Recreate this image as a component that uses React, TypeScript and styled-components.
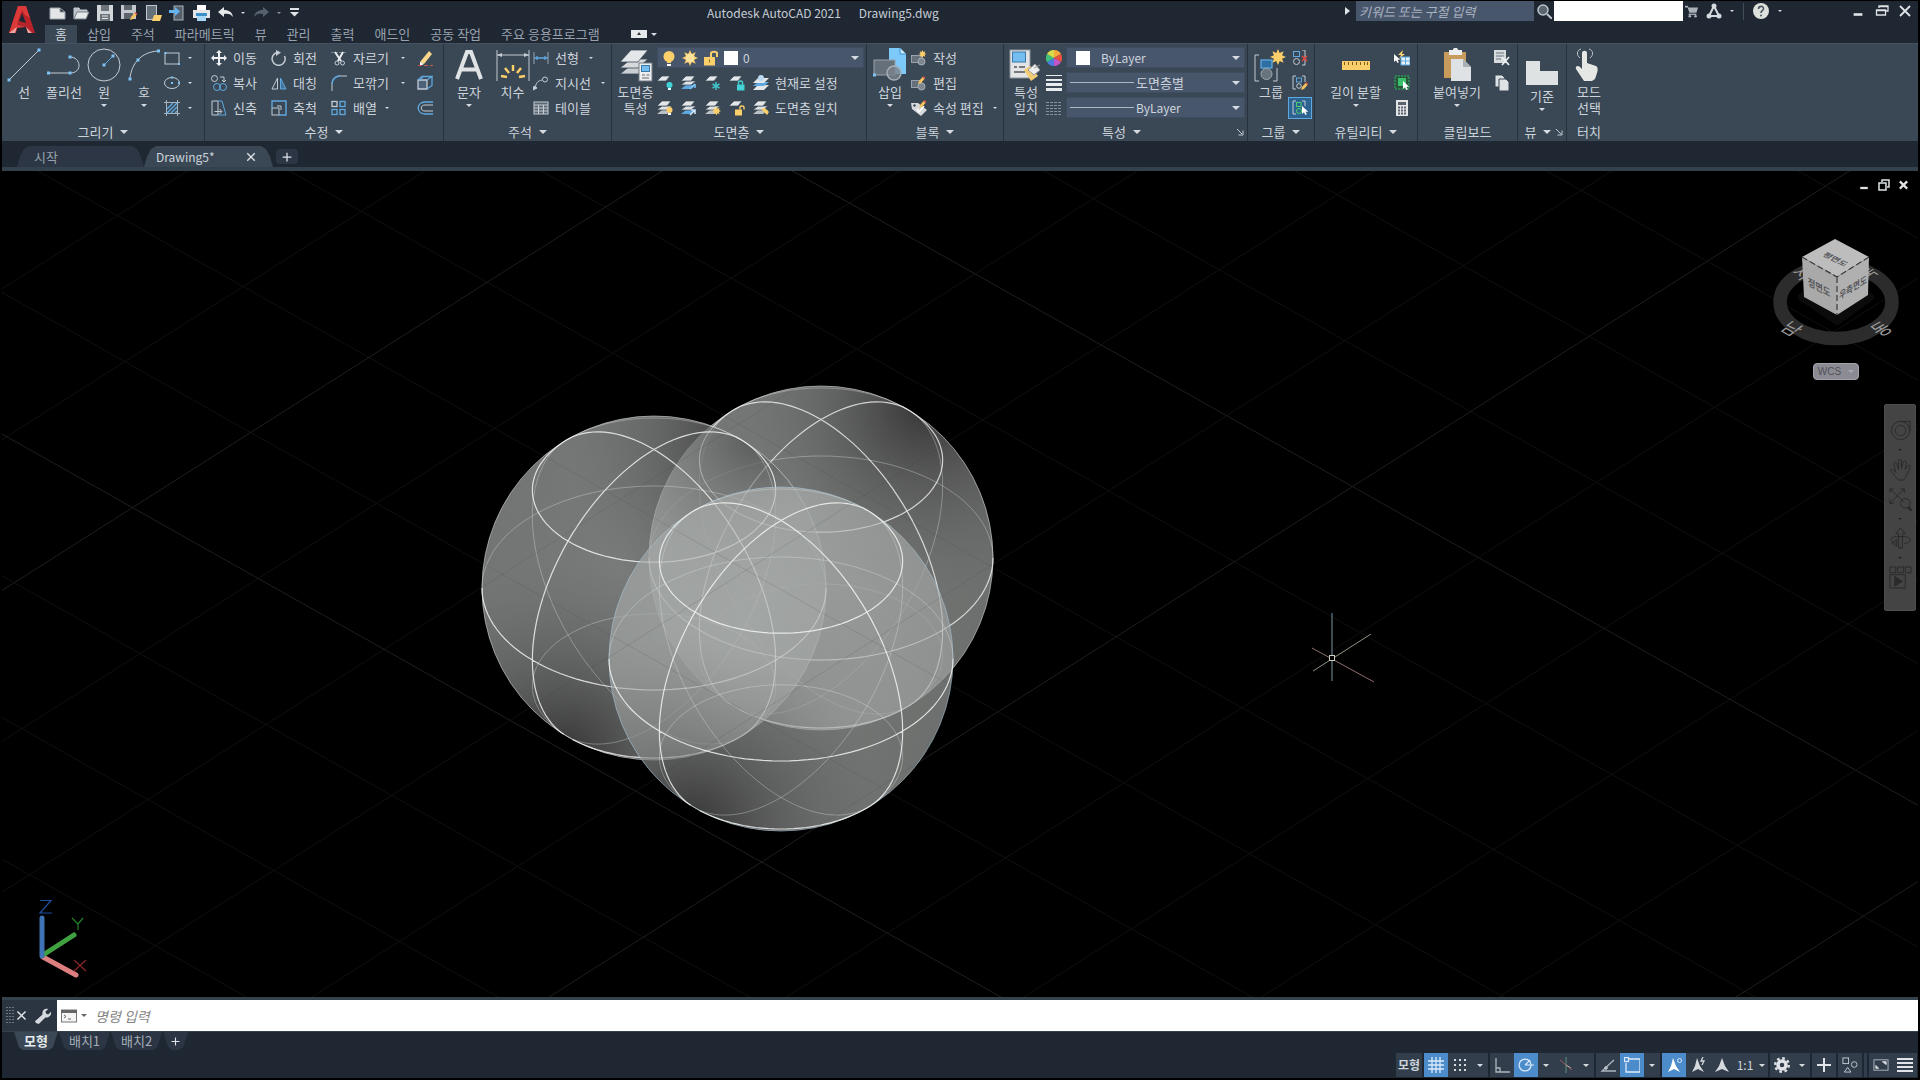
import React from "react";
import styled, { createGlobalStyle, css } from "styled-components";

const c = {
  chrome: "#1f2733",
  ribbon: "#3a4754",
  edge: "#28323e",
  field: "#48566c",
  text: "#ccd4dc",
  dim: "#98a2ae",
  line: "#c4ccd4",
  blue: "#5fa9e0",
  yellow: "#fbcf6a",
  active: "#4d8ccb",
};

const Global = createGlobalStyle`
  * { box-sizing: border-box; }
  html, body { margin: 0; background: #000; }
  body, button, input, select {
    font-family: "Noto Sans CJK KR", "Noto Sans", sans-serif;
    font-size: 13px;
    line-height: 16px;
    color: ${c.text};
  }
  button { background: none; border: 0; padding: 0; margin: 0; white-space: nowrap; }
  svg { display: block; flex: none; }
`;

/* ---------- frame ---------- */

const Page = styled.div`
  display: flex;
  flex-direction: column;
  min-height: 100vh;
  padding: 1px 2px 2px;
  background: #000;
`;
const Header = styled.header`
  position: relative;
  background: ${c.chrome};
`;
const Logo = styled.div`
  position: absolute;
  left: 6px;
  top: 3px;
`;
const TitleBar = styled.div`
  display: flex;
  align-items: center;
  height: 24px;
  overflow: hidden;
`;
const QuickAccess = styled.div`
  display: flex;
  align-items: center;
  gap: 6px;
  flex: 0 0 36.8%;
  padding-left: 46px;
`;
const QuickButton = styled.button<{ $w?: number }>`
  display: flex;
  justify-content: center;
  align-items: center;
  width: ${(p) => p.$w ?? 18}px;
  height: 20px;
`;
const WindowTitle = styled.div`
  display: flex;
  gap: 18px;
  font-size: 12px;
  color: #c5ccd3;
`;
const TitleTools = styled.div`
  display: flex;
  align-items: center;
  height: 20px;
  margin: 0 4px 4px auto;
`;
const SearchBox = styled.input`
  width: 178px;
  height: 20px;
  margin-left: 6px;
  padding: 0 3px;
  border: 0;
  background: ${c.field};
  font-style: italic;
  &::placeholder { color: #a9b2c0; opacity: 1; }
`;
const UserBox = styled.div`
  width: 129px;
  height: 20px;
  background: #fff;
`;
const ToolButton = styled.button<{ $w: number }>`
  display: flex;
  justify-content: center;
  align-items: center;
  width: ${(p) => p.$w}px;
  height: 20px;
`;
const MinimizeButton = styled(ToolButton)`
  justify-content: flex-end;
  padding-right: 3px;
`;
const Rule = styled.span`
  width: 1px;
  height: 17px;
  margin: 0 7px;
  background: #434d5a;
`;

const TabRow = styled.nav`
  display: flex;
  align-items: center;
  height: 18px;
  padding-left: 43px;
`;
const RibbonTab = styled.button<{ $on?: boolean }>`
  height: 18px;
  padding: 0 10px;
  color: ${(p) => (p.$on ? c.text : c.dim)};
  ${(p) => p.$on && css`background: ${c.ribbon};`}
`;
const ViewToggle = styled.button`
  display: flex;
  align-items: center;
  gap: 4px;
  margin-left: 21px;
`;

/* ---------- ribbon ---------- */

const Ribbon = styled.div`
  display: flex;
  height: 98px;
  background: ${c.ribbon};
  border-top: 1px solid #44515e;
`;
const Panel = styled.section<{ $w?: number }>`
  display: flex;
  flex-direction: column;
  flex: 0 0 auto;
  width: ${(p) => (p.$w ? p.$w + "px" : "auto")};
  border-right: ${(p) => (p.$w ? "1px solid " + c.edge : "0")};
`;
const PanelBody = styled.div`
  display: flex;
  align-items: flex-start;
  flex: 1;
  padding: 1px 2px 0;
`;
const PanelTitle = styled.div<{ $launch?: boolean }>`
  position: relative;
  display: flex;
  justify-content: center;
  align-items: center;
  gap: 7px;
  height: 19px;
  padding-right: ${(p) => (p.$launch ? 8 : 0)}px;
`;
const Launcher = styled.button`
  position: absolute;
  right: 3px;
  top: 6px;
`;
const BigButton = styled.button<{ $w: number; $drop?: number }>`
  display: flex;
  flex-direction: column;
  align-items: center;
  width: ${(p) => p.$w}px;
  padding-top: ${(p) => 3 + (p.$drop ?? 0)}px;
  flex: none;
`;
const BigLabel = styled.span`
  margin-top: 2px;
  text-align: center;
  white-space: pre-line;
`;
const Stack = styled.div`
  display: flex;
  flex-direction: column;
  flex: 1 1 auto;
`;
const ToolRow = styled.div<{ $gap?: number }>`
  display: flex;
  align-items: center;
  gap: ${(p) => p.$gap ?? 8}px;
  height: 25px;
`;
const SmallButton = styled.button<{ $on?: boolean }>`
  display: flex;
  align-items: center;
  gap: 6px;
  ${(p) =>
    p.$on &&
    css`
      padding: 2px 3px;
      margin-left: -4px;
      border: 1px solid #5fa9e0;
      background: #2c6391;
    `}
`;
const Modify = styled.div`
  display: grid;
  grid-template-columns: 60px 60px 86px 18px;
  grid-auto-rows: 25px;
  align-items: center;
  padding-left: 4px;
`;
const Split = styled.div<{ $wide?: boolean }>`
  display: flex;
  align-items: center;
  justify-content: ${(p) => (p.$wide ? "space-between" : "flex-start")};
  gap: 8px;
  padding-right: 12px;
`;
const Combo = styled.label`
  display: flex;
  align-items: center;
  gap: 5px;
  flex: 1;
  height: 21px;
  padding: 0 4px 0 3px;
  background: ${c.field};
  border: 1px solid #3f4c60;
`;
const Select = styled.select<{ $latin?: boolean }>`
  flex: 1;
  min-width: 0;
  appearance: none;
  border: 0;
  padding: 0;
  background: transparent;
  outline: none;
  font-size: ${(p) => (p.$latin ? 12 : 13)}px;
`;
const Swatch = styled.span<{ $gap?: number }>`
  width: 14px;
  height: 14px;
  margin: 0 ${(p) => p.$gap ?? 0}px;
  background: #fff;
`;
const Stroke = styled.span`
  width: 64px;
  height: 1px;
  margin-right: -3px;
  background: #aeb8c4;
`;

const Caret = styled.span<{ $s?: number; $c?: string }>`
  display: block;
  flex: none;
  width: 0;
  height: 0;
  border: ${(p) => p.$s ?? 3}px solid transparent;
  border-top-color: ${(p) => p.$c ?? "#d5dbe1"};
  border-bottom-width: 0;
`;
const CaretBelow = styled(Caret)`
  margin-top: 4px;
`;

/* ---------- document tabs ---------- */

const DocTabs = styled.nav`
  display: flex;
  align-items: flex-end;
  height: 30px;
  padding-left: 15px;
  background: ${c.chrome};
  border-bottom: 4px solid #33414c;
`;
const DocTab = styled.div<{ $on?: boolean; $w: number }>`
  display: flex;
  align-items: center;
  justify-content: space-between;
  width: ${(p) => p.$w}px;
  height: 21px;
  padding: 0 16px 0 ${(p) => (p.$on ? 12 : 17)}px;
  font-size: ${(p) => (p.$on ? 12 : 13)}px;
  color: ${(p) => (p.$on ? c.text : c.dim)};
  background: ${(p) => (p.$on ? c.ribbon : "#2c3644")};
  clip-path: polygon(0 100%, 3px 50%, 7px 3px, 12px 0, calc(100% - 12px) 0, calc(100% - 7px) 3px, calc(100% - 3px) 50%, 100% 100%);
`;
const NewTab = styled.button`
  display: flex;
  align-items: center;
  justify-content: center;
  width: 22px;
  height: 15px;
  margin: 0 0 3px 3px;
  background: #2c3644;
  border-radius: 4px;
`;

/* ---------- drawing area ---------- */

const Viewport = styled.main`
  position: relative;
  flex: 1 1 0;
  min-height: 400px;
  overflow: hidden;
  background: #000;
`;
const Scene = styled.svg`
  position: absolute;
  inset: 0;
  width: 100%;
  height: 100%;
`;
const ViewControls = styled.div`
  position: absolute;
  top: 8px;
  right: 9px;
  display: flex;
  gap: 8px;
`;
const CubeHolder = styled.div`
  position: absolute;
  top: 60px;
  right: 10px;
  display: flex;
  flex-direction: column;
  align-items: center;
  gap: 12px;
`;
const WcsButton = styled.button`
  display: flex;
  align-items: center;
  gap: 7px;
  height: 17px;
  padding: 0 4px;
  border: 1px solid #a3a3ab;
  border-radius: 4px;
  background: #8b8b94;
  color: #50505a;
  font-family: "Liberation Sans", sans-serif;
  font-size: 10px;
`;
const NavBar = styled.div`
  position: absolute;
  top: 233px;
  right: 2px;
  display: flex;
  flex-direction: column;
  align-items: center;
  width: 32px;
  height: 207px;
  padding-top: 14px;
  gap: 7px;
  background: #444;
  border: 1px solid #4d4d4d;
  border-radius: 2px;
`;

/* ---------- command line and status ---------- */

const CommandBar = styled.div`
  display: flex;
  height: 35px;
  border-top: 3px solid #34424b;
  background: #fff;
  border-bottom: 1px solid #34404c;
`;
const CommandTools = styled.div`
  display: flex;
  align-items: center;
  width: 55px;
  padding-left: 4px;
  background: #2b3542;
`;
const CommandTool = styled.button<{ $w: number }>`
  display: flex;
  justify-content: center;
  width: ${(p) => p.$w}px;
`;
const CommandLabel = styled.label`
  display: flex;
  align-items: center;
  gap: 4px;
  padding-left: 4px;
`;
const CommandInput = styled.input`
  flex: 1;
  border: 0;
  padding: 0 8px;
  outline: none;
  background: #fff;
  color: #333;
  font-style: italic;
  font-size: 14px;
  &::placeholder { color: #858585; opacity: 1; }
`;
const Footer = styled.footer`
  background: ${c.chrome};
`;
const LayoutTabs = styled.nav`
  display: flex;
  height: 21px;
  padding-left: 12px;
  gap: 1px;
`;
const LayoutTab = styled.button<{ $on?: boolean; $pad?: number }>`
  height: 18px;
  padding: 0 ${(p) => p.$pad ?? 10}px;
  color: ${(p) => (p.$on ? "#e6ebef" : "#a3adb8")};
  font-weight: ${(p) => (p.$on ? 700 : 400)};
  background: ${(p) => (p.$on ? c.ribbon : "#2b3543")};
  clip-path: polygon(0 0, 100% 0, calc(100% - 5px) 85%, calc(100% - 9px) 100%, 9px 100%, 5px 85%);
`;
const StatusBar = styled.div`
  display: flex;
  justify-content: flex-end;
  gap: 2px;
  height: 25px;
  padding-right: 1px;
`;
const StatusGroup = styled.div`
  display: flex;
  height: 24px;
  background: #323e4b;
`;
const StatusButton = styled.button<{ $on?: boolean; $w?: number; $strong?: boolean }>`
  display: flex;
  align-items: center;
  justify-content: center;
  gap: 6px;
  width: ${(p) => p.$w ?? 24}px;
  font-size: 12px;
  font-weight: ${(p) => (p.$strong ? 700 : 400)};
  background: ${(p) => (p.$on ? c.active : "transparent")};
`;

/* ---------- icons ---------- */

const Dot = ({ x, y, r = 1.5 }: { x: number; y: number; r?: number }) => (
  <rect x={x - r} y={y - r} width={r * 2} height={r * 2} fill="#7cc4f5" stroke="none" />
);
const Sheets = ({ top = "#dfe3e6", low = "#b9c0c6", one = false }: { top?: string; low?: string; one?: boolean }) => (
  <g stroke="none">
    {!one && <path d="M0 14h10l5-4H5z" fill={low} />}
    {!one && <path d="M0 10h10l5-4H5z" fill={top} stroke="#3a4754" strokeWidth=".7" />}
    <path d={one ? "M0 6h9l4-5H5z" : "M0 6h10l4-5H5z"} fill="#e4e7e9" stroke="#3a4754" strokeWidth=".7" />
  </g>
);
const BlockBase = () => (
  <g>
    <rect x="0.500" y="5.500" width="10" height="7" fill="#66707a" stroke="#98a2ab" />
    <circle cx="10.500" cy="11.500" r="3.500" fill="#7d868f" stroke="#a7b0b8" />
  </g>
);
const Spark = ({ x, y, r }: { x: number; y: number; r: number }) => (
  <path
    d={Array.from({ length: 16 }, (_, i) => {
      const a = (i * Math.PI) / 8;
      const q = i % 2 ? r * 0.55 : r;
      return (i ? "L" : "M") + (x + q * Math.cos(a)).toFixed(2) + " " + (y + q * Math.sin(a)).toFixed(2);
    }).join("") + "Z"}
    fill={c.yellow}
    stroke="none"
  />
);
const Pencil = ({ x = 0, y = 0 }: { x?: number; y?: number }) => (
  <g transform={`translate(${x} ${y})`} stroke="none">
    <path d="M0 7l1-3 3.500-4 2 2L3 6z" fill="#f5c15c" />
    <path d="M4.500 0l2 2 1-1-2-2z" fill="#e2574c" />
  </g>
);
const Pointer = ({ x, y }: { x: number; y: number }) => (
  <path d={`M${x} ${y}v8l2-1.800 1.400 2.800 1.400-.7-1.300-2.600h2.700z`} fill="#fff" stroke="none" />
);

const art: Record<string, React.ReactNode> = {
  neu: <path d="M1 3h10l5 4v7H1zM11 3v4h5" fill="#e3e5e7" stroke="#9aa2a9" />,
  open: <g><path d="M1 14V3h5l1 2h7v3" fill="#bcc2c7" /><path d="M1 14l3-7h12l-3 7z" fill="#e6e8ea" stroke="#777f88" /></g>,
  save: <g><path d="M0 0h16v16H0z" fill="#d3d6d9" stroke="none" /><path d="M4 0h8v6H4zM3 9h10v7H3z" fill="#6c747c" stroke="none" /><path d="M5 11h6M5 13.500h6" stroke="#e6e8ea" /></g>,
  saveas: <g><path d="M0 0h15v14H0z" fill="#c3c8cc" stroke="none" /><path d="M3 0h8v5H3zM3 8h9v6H3z" fill="#5c646c" stroke="none" /><Pencil x={9} y={8} /></g>,
  mobopen: <g><rect x="1.500" y="0.500" width="10" height="14" fill="#66707a" stroke="#c2c8cd" /><path d="M7 16l2-6h8l-2 6z" fill="#fbcf6a" stroke="none" /></g>,
  mobsave: <g><rect x="5" y="1" width="9" height="14" fill="#55606c" stroke="#aab2b9" /><path d="M0 5h6V2l5 4.500L6 11V8H0z" fill="#62b5ee" stroke="none" /></g>,
  print: <g><path d="M4 0h9v5H4z" fill="#fff" stroke="none" /><path d="M0 5h17v8H0z" fill="#e4e6e8" stroke="none" /><path d="M3 8h11v3H3z" fill="#3a8fc8" stroke="none" /><path d="M4 11h9v5H4z" fill="#a8d6f5" stroke="none" /></g>,
  undo: <path d="M1 7l6-5v3c5 0 8 2 9 7-2-3-5-4-9-3v3z" fill="#e6e8ea" stroke="none" />,
  redo: <path d="M16 7l-6-5v3c-5 0-8 2-9 7 2-3 5-4 9-3v3z" fill="#56616d" stroke="none" />,
  custom: <g><path d="M3 4h9" stroke="#dfe3e6" strokeWidth="2" /><path d="M3 7h9l-4.500 4.500z" fill="#dfe3e6" stroke="none" /></g>,
  mag: <g><circle cx="7" cy="7" r="5" fill="#5b6570" stroke="#bcc3ca" strokeWidth="1.500" /><path d="M11 11l5 5" stroke="#bcc3ca" strokeWidth="2" /></g>,
  cart: <g fill="#a9b1b9" stroke="none"><path d="M0 2h3l1 2h11l-2 6H5L3 4H0z" /><path d="M4 11h9v1.500H4z" /><circle cx="5.500" cy="14" r="1.500" /><circle cx="12" cy="14" r="1.500" /></g>,
  tri: <g><path d="M8 3L3 13h10z" fill="none" stroke="#d5dade" strokeWidth="2" /><circle cx="8" cy="3" r="2.500" fill="#d5dade" stroke="none" /><circle cx="3" cy="13" r="2.500" fill="#d5dade" stroke="none" /><circle cx="13" cy="13" r="2.500" fill="#d5dade" stroke="none" /></g>,
  help: <g><circle cx="8" cy="8" r="8" fill="#dfe2dc" stroke="none" /><path d="M5.500 6c0-3.500 5.500-3.500 5 0-.2 1.500-2.500 1.500-2.500 4" stroke="#4a5560" strokeWidth="1.600" /><circle cx="8" cy="12.500" r="1" fill="#4a5560" stroke="none" /></g>,
  min: <path d="M3 12h10" stroke="#dfe3e6" strokeWidth="3" />,
  restore: <path d="M5 5V3h9v5h-2M2.500 7h9v5h-9zM5 3.500h9M2.500 7.500h9" stroke="#dfe3e6" strokeWidth="1.300" />,
  close: <path d="M3 3l10 10M13 3L3 13" stroke="#dfe3e6" strokeWidth="1.800" />,

  line: <g><path d="M2 32L32 2" /><Dot x={2} y={32} /><Dot x={32} y={2} /></g>,
  pline: <g><path d="M1 25h22c13 0 11-16 0-16" /><Dot x={1.500} y={25} /><Dot x={23} y={25} /><Dot x={23} y={9} /></g>,
  circle: <g><circle cx="17" cy="17" r="16" /><path d="M17 17l8-8" stroke={c.blue} /><Dot x={17} y={17} /><Dot x={26} y={8} /></g>,
  arc: <g><path d="M3 31C4 16 14 4 31 3" /><Dot x={3} y={31} /><Dot x={11} y={12} /><Dot x={31.500} y={3} /></g>,
  rect: <g><rect x="1" y="3" width="14" height="11" /><Dot x={1.500} y={3} r={1} /><Dot x={15} y={14} r={1} /></g>,
  ellipse: <g><ellipse cx="8" cy="8" rx="7.500" ry="5.500" /><Dot x={8} y={8} r={1} /><Dot x={8} y={2.500} r={1} /><Dot x={15} y={8} r={1} /></g>,
  hatch: <g><path d="M2.500 0v16M13.500 0v16M0 2.500h16M0 13.500h16" stroke="#aab4bd" /><path d="M3 9l6-6M3 13l10-10M7 13l6-6M11 13l2-2" stroke={c.blue} strokeWidth="1.400" /></g>,
  move: <path d="M8 0l3 3H9v4h4V5l3 3-3 3V9H9v4h2l-3 3-3-3h2V9H3v2L0 8l3-3v2h4V3H5z" fill="#eef0f2" stroke="none" />,
  rotate: <g><path d="M6 2.500A6.500 6.500 0 1 0 13.500 6" strokeWidth="1.500" /><path d="M5 0l5 2.500L5 6z" fill={c.line} stroke="none" /></g>,
  trim: <g><path d="M0 2.500h16" stroke="#77828d" strokeDasharray="3 1" /><path d="M4 2l6 9M12 2L7 11" stroke="#e8ebee" strokeWidth="2" /><circle cx="6" cy="13" r="2" /><circle cx="11.500" cy="13" r="2" /></g>,
  erase: <g><path d="M1 15.500h15" stroke="#c8574f" strokeDasharray="4 2" /><path d="M3 12l9-11 3 3-8 10z" fill="#fbd78a" stroke="none" /><path d="M3 12l4 2-2 1H3z" fill="#fff" stroke="none" /></g>,
  copy: <g><circle cx="3.500" cy="3.500" r="3" /><path d="M9 2h4v4M11 5l2 2 2-2" /><circle cx="6" cy="12" r="3.500" stroke={c.blue} /><circle cx="12" cy="12" r="3.500" stroke={c.blue} /></g>,
  mirror: <g><path d="M6.500 3v11H1z" /><path d="M9.500 3v11H15z" fill="#44729a" stroke={c.blue} /></g>,
  fillet: <g><path d="M1 16V9C1 4 5 1 9 1h7" stroke={c.line} /><path d="M1 9C1 4 5 1 9 1" stroke={c.blue} strokeWidth="1.500" /></g>,
  box3d: <g stroke={c.blue} strokeWidth="1.300"><path d="M1 5h9v9H1z" fill="#4b6278" stroke={c.line} /><path d="M1 5l4-3.500h10L10 5M10 14l5-3.500v-9M5 1.500V5" /></g>,
  stretch: <g><path d="M1 1h6v14H1zM3.500 11.500h7M8.500 9l2.500 2.500L8.500 14" /><path d="M7 1h4l4 14H7" stroke={c.blue} /></g>,
  scale: <g><rect x="1" y="8" width="7" height="7" /><path d="M1 8V1h14v14H8" stroke={c.blue} strokeWidth="1.400" /><path d="M6 6h4v4" stroke={c.line} /></g>,
  array: <g strokeWidth="1.300"><rect x="1" y="1.500" width="5" height="5" /><rect x="9" y="1.500" width="5" height="5" stroke={c.blue} /><rect x="1" y="9.500" width="5" height="5" stroke={c.blue} /><rect x="9" y="9.500" width="5" height="5" stroke={c.blue} /></g>,
  offset: <g><path d="M16 2H8C-1 2-1 14 8 14h8" stroke={c.blue} strokeWidth="1.300" /><path d="M16 5H8c-5 0-5 6 0 6h8" /></g>,

  dim: <g><path d="M1 2v31M33 2v31M1 7h32" /><path d="M1 7l5-2v4zM33 7l-5-2v4z" fill={c.line} stroke="none" /><path d="M17 17v6M9 20l4 5M25 20l-4 5M5 28l6 1M29 28l-6 1" stroke={c.yellow} strokeWidth="2.500" /></g>,
  lin: <g><path d="M1 2v12M15 2v12" stroke="#9aa5b0" /><path d="M1 8h14M4 6v4M12 6v4" stroke={c.blue} strokeWidth="1.300" /></g>,
  leader: <g><path d="M2 14c1-7 3-8 7-9" /><circle cx="12" cy="4.500" r="2.500" /><path d="M0 15l1-4 3 2z" fill={c.line} /></g>,
  table: <g><rect x="1" y="2" width="14" height="12" fill="#5a6672" /><path d="M1 5h14M1 8h14M1 11h14M5.500 5v9M10.500 5v9" /></g>,

  layerprop: <g><g stroke="#3a4754" strokeWidth=".8"><path d="M1 26h18l10-9H12z" fill="#c9ced2" /><path d="M1 20h18l10-9H12z" fill="#d6dadd" /><path d="M1 14h18L29 2H12z" fill="#e4e7e9" /></g><rect x="20" y="15" width="13" height="18" fill="#eceeef" stroke="#777f88" /><rect x="22.500" y="17.500" width="8" height="6" fill="#74bdf0" stroke="#3a78a8" /><path d="M23 27h3M27.500 27h3M23 30h7" stroke="#666" /></g>,
  bulb: <g><circle cx="8" cy="6.500" r="5.500" fill={c.yellow} stroke="none" /><path d="M6 11h4v2H6z" fill={c.yellow} stroke="none" /><path d="M6 14h4v2H6z" fill="#fff" stroke="none" /></g>,
  sun: <g><Spark x={8} y={8} r={8} /><circle cx="8" cy="8" r="4.500" fill="#fde09a" stroke="none" /></g>,
  unlock: <g><rect x="1" y="7" width="11" height="8.500" fill={c.yellow} stroke="none" /><path d="M8 7V3.500C8 1 14 1 14 3.500V7" stroke={c.yellow} strokeWidth="2" /><path d="M6.500 9.500v3" stroke="#8a6a20" /></g>,
  l1: <g><Sheets one /><circle cx="12.500" cy="10" r="3" fill="#41d3d8" stroke="none" /><path d="M11 13h3v2h-3z" fill="#dff" stroke="none" /></g>,
  l2: <g><Sheets low="#5fa9e0" /><path d="M9 14l5-5M14 9v4" stroke="#7cc4f5" strokeWidth="1.500" /></g>,
  l3: <g><Sheets one /><path d="M11 7v8M7.500 9l7 4M14.500 9l-7 4" stroke="#41c3c8" strokeWidth="1.500" /></g>,
  l4: <g><Sheets one /><rect x="8" y="9.500" width="7.500" height="6" fill="#41d3d8" stroke="none" /><path d="M9.500 9.500V7.500c0-2 4-2 4 0v2" stroke="#41d3d8" strokeWidth="1.400" /></g>,
  l5: <g><path d="M0 15h11l5-5H5z" fill="#e4e7e9" stroke="none" /><path d="M0 11h11l5-4H5z" fill="#5fa9e0" stroke="none" /><path d="M0 8h11l5-5H5z" fill="#e4e7e9" stroke="none" /><circle cx="8" cy="3" r="3" fill="#b9d9f3" stroke="none" /></g>,
  l6: <g><Sheets /><circle cx="12.500" cy="10" r="3" fill={c.yellow} stroke="none" /><path d="M11 13h3v2h-3z" fill="#fff" stroke="none" /></g>,
  l7: <g><Sheets low="#5fa9e0" /><path d="M9 15l5-5M10 10h4v4" stroke="#cfe8fb" strokeWidth="1.500" /></g>,
  l8: <g><Sheets /><Spark x={11.500} y={11} r={4.500} /></g>,
  l9: <g><Sheets one /><rect x="6" y="9.500" width="7" height="6" fill={c.yellow} stroke="none" /><path d="M11 9.500V7.500c0-2 4-2 4 0v2" stroke={c.yellow} strokeWidth="1.400" /></g>,
  l10: <g><Sheets /><path d="M8 9l6 6 2-3-4-4z" fill={c.yellow} stroke="none" /></g>,

  insert: <g><path d="M16 0h11l6 6v20H16z" fill="#7cc9fa" stroke="none" /><path d="M27 0v6h6" fill="#c8e8fc" stroke="#3a8fc8" /><rect x="1" y="12" width="21" height="15" fill="#66707a" stroke="#98a2ab" /><circle cx="21" cy="25" r="7" fill="#7a838c" fillOpacity=".8" stroke="#a7b0b8" strokeWidth="1.400" /><Dot x={1.500} y={27} /></g>,
  create: <g><BlockBase /><Spark x={11.500} y={4} r={4} /></g>,
  edit: <g><BlockBase /><Pencil x={7} y={2} /></g>,
  attr: <g><path d="M0 3h7l9 7-6 6L1 9z" fill="#d7dbde" stroke="none" /><circle cx="3.500" cy="5.500" r="1.200" fill="#3a4754" stroke="none" /><path d="M6 9l2 3 5-6" stroke="#fff" strokeWidth="1.500" /><Pencil x={8} y={1} /></g>,

  match: <g><rect x="1" y="2" width="20" height="28" fill="#e2e4e6" stroke="#8d959c" /><rect x="3.500" y="4" width="13" height="10" fill="#74bdf0" stroke="#3a78a8" /><path d="M5 19h3M10 19h6M5 24h11" stroke="#555" strokeWidth="1.400" /><path d="M15 22l6-4 8 10-7 5z" fill="#f3cd74" stroke="none" /><path d="M19 22l7-6 5 6-6 5zM25 20l6-3" fill="#eee" stroke="#999" /></g>,
  wheel: <g stroke="none"><path d="M8 8V0a8 8 0 0 1 7 4z" fill="#f6a93b" /><path d="M8 8l7-4a8 8 0 0 1 0 8z" fill="#e9503e" /><path d="M8 8l7 4a8 8 0 0 1-7 4z" fill="#c154c9" /><path d="M8 8v8a8 8 0 0 1-7-4z" fill="#4b7be0" /><path d="M8 8l-7 4a8 8 0 0 1 0-8z" fill="#3fc27b" /><path d="M8 8L1 4a8 8 0 0 1 7-4z" fill="#d9dc4a" /></g>,
  weights: <g fill="#e8ebee" stroke="none"><path d="M0 0h16v1H0zM0 4h16v2H0zM0 8h16v3H0zM0 13h16v3H0z" /></g>,
  types: <path d="M0 2.500h16M0 5.500h16M0 8.500h16M0 11.500h16M0 14.500h16" stroke="#87929d" strokeDasharray="3 1" />,

  group: <g><path d="M5 7H1v26h4M19 33h4V20" /><rect x="7" y="12" width="11" height="8" fill="#2f6ea3" stroke={c.blue} strokeWidth="1.300" /><circle cx="12.500" cy="26" r="5.500" fill="#69737d" stroke="#9aa5b0" /><Spark x={24} y={9} r={8} /></g>,
  ungroup: <g><rect x="1.500" y="1.500" width="6" height="5" stroke={c.blue} /><circle cx="4.500" cy="11.500" r="3" /><path d="M10 0h3v15h-3" /><path d="M10 6l5 5M15 6l-5 5" stroke="#e2473c" strokeWidth="1.600" /></g>,
  gedit: <g><path d="M4 1H1v13h3M10 1h3v6" /><rect x="4.500" y="3" width="5" height="4" stroke={c.blue} /><circle cx="7" cy="11" r="2.300" /><Pencil x={9} y={8} /></g>,
  gsel: <g><path d="M4 1H1v13h3M10 1h3v5" /><rect x="4.500" y="2.500" width="4.500" height="4" stroke="#4ad06c" /><circle cx="7" cy="11" r="2.500" stroke="#4ad06c" /><Pointer x={10} y={6} /></g>,
  ruler: <g><rect x="3" y="13" width="28" height="9" fill={c.yellow} stroke="none" /><path d="M5.500 14v3M9.500 14v3M13.500 14v3M17.500 14v3M21.500 14v3M25.500 14v3M28.500 14v3" stroke="#7d5c1c" /></g>,
  quick: <g><path d="M9 0L4 5h3l-2 4 6-5H8z" fill={c.yellow} stroke="none" /><rect x="7" y="7" width="9" height="8" fill="#e8f2fa" stroke="#5fa9e0" /><path d="M11.500 7v8M7 11h9" stroke="#5fa9e0" /><Pointer x={0} y={4} /></g>,
  selall: <g><rect x="1" y="1" width="14" height="13" fill="#27543a" stroke="#2fb563" strokeDasharray="2 1" /><rect x="4" y="3" width="8" height="8" fill="#3ac06d" stroke="none" /><Pointer x={9} y={6} /></g>,
  calc: <g><rect x="2" y="0" width="12" height="16" fill="#e2e4e6" stroke="none" /><path d="M4 2h8v3H4z" fill="#59636d" stroke="none" /><path d="M4 7.500h8M4 10.500h8M4 13.500h8" stroke="#59636d" strokeWidth="2" strokeDasharray="2 1" /></g>,
  paste: <g stroke="none"><rect x="4" y="4" width="22" height="26" fill="#c79b5c" /><path d="M9 2h4c0-3 5-3 5 0h4v5H9z" fill="#eceeef" /><path d="M11 11h12l8 8v14H11z" fill="#dfe2e4" /><path d="M23 11v8h8z" fill="#a9b0b6" /></g>,
  cut: <g><rect x="0" y="0" width="12" height="13" fill="#d7dbde" stroke="none" /><path d="M2 3h8M2 6h8M2 9h5" stroke="#69737d" /><path d="M8 15l7-8M15 15L8 7" stroke="#eef0f2" strokeWidth="1.700" /></g>,
  copyclip: <g fill="#dfe2e4" stroke="#3a4754"><path d="M1 0h7l3 3v9H1z" /><path d="M5 4h7l3 3v9H5z" /></g>,
  base: <path d="M1 9h14v10h18v14H1z" fill="#dfe2e2" stroke="none" />,
  touch: <g><path d="M8 10C4 7 5 2 9 1M18 10c4-3 3-8-1-9" stroke="#c0c7cd" /><path d="M10 5c0-3 5-3 5 0v10l9 3c2 1 2 4 1 7l-2 6-3 2h-8l-8-12c-1-3 2-4 4-2l2 2z" fill="#e6e8e6" stroke="none" /></g>,
  launch: <path d="M1 1l5 5M2.500 7H7V2.500" stroke={c.line} />,

  wrench: <path d="M1 16l-1-2 8-7c-1-4 2-7 6-6l-3 3 1 2 2 1 3-3c1 4-3 7-6 6l-7 7z" fill="#d5dade" stroke="none" />,
  prompt: <g><rect x="0.500" y="2" width="15" height="12" fill="#f4f4f4" stroke="#777" /><path d="M0 3.500h16" stroke="#666" strokeWidth="3" /><path d="M3 7l2 1.500L3 10M7 11h3" stroke="#666" /></g>,

  grid: <path d="M4 0v16M8 0v16M12 0v16M0 4h16M0 8h16M0 12h16" stroke="#dbeafa" strokeWidth="1.300" />,
  snap: <path d="M2 3h14M2 8h14M2 13h14" stroke="#d5dade" strokeWidth="2" strokeDasharray="2 3" />,
  ortho: <path d="M2 1v14h14M2 11h4v4" stroke="#aeb7c0" strokeWidth="1.300" />,
  polar: <g stroke="#dbeafa" strokeWidth="1.300"><circle cx="7.500" cy="8.500" r="6.300" /><path d="M7.500 8.500H17M7.500 8.500L13 3" /></g>,
  iso: <g><path d="M8 0v16" stroke="#5b8f7c" /><path d="M2 3l12 10" stroke="#a05a5a" /><path d="M8 8l5 3" stroke="#aaa" /></g>,
  angle: <g><path d="M14 3L2 14h14" stroke="#aeb7c0" strokeWidth="1.300" /><circle cx="6" cy="11" r="1.300" fill="#aeb7c0" /></g>,
  osnap: <g stroke="#dbeafa" strokeWidth="1.300"><path d="M5 2h11v13H2V6" /><rect x="0.500" y="0.500" width="4" height="4" /></g>,
  ann1: <g><path d="M7 1l3 8 4 6-6-3-6 3 3-6z" fill="#fff" stroke="none" /><circle cx="13.500" cy="3.500" r="2" stroke="#dbeafa" /></g>,
  ann2: <g><path d="M7 1l3 8 4 6-6-3-6 3 3-6z" fill="#d5dade" stroke="none" /><path d="M13 0l-2 4h3l-2 4" stroke="#d5dade" strokeWidth="1.300" /></g>,
  ann3: <path d="M8 1l3 8 4 6-7-3-7 3 4-6z" fill="#d5dade" stroke="none" />,
  gear: <g><circle cx="8" cy="8" r="4" stroke="#e0e4e8" strokeWidth="3.500" /><circle cx="8" cy="8" r="6.800" stroke="#e0e4e8" strokeWidth="2.400" strokeDasharray="2.670 2.670" /></g>,
  plus: <path d="M8 1v14M1 8h14" stroke="#e0e4e8" strokeWidth="2" />,
  shapes: <g><rect x="1" y="1" width="6" height="6" /><circle cx="13" cy="8" r="3" /><path d="M6 11l3.500 5h-7z" /></g>,
  clean: <g><rect x="1" y="3" width="15" height="11" stroke="#aeb7c0" /><path d="M10 5h4v3zM3 12V9l3 3z" fill="#d5dade" stroke="#d5dade" /></g>,
  menu: <path d="M0 2h16M0 6h16M0 10h16M0 14h16" stroke="#e0e4e8" strokeWidth="2" />,

  nwheel: <g><circle cx="12" cy="12" r="9.500" /><circle cx="12" cy="12" r="5.500" /><path d="M12 2.500h10V12" /></g>,
  nhand: <path d="M9 22l-7-8c-1-2 1-3 3-1l2 2-2-9c0-2 2-2 3 0l2 6V3c0-2 3-2 3 0v8l2-7c1-2 3-1 3 1l-1 7 3-4c2-1 3 0 2 2l-4 9-3 4H10z" />,
  nzoom: <g><path d="M1 1l15 14M16 1L1 16M1 5V1h4M12 1h4v4M1 12v4h4" /><circle cx="17" cy="16" r="5" /><path d="M20 20l4 4" strokeWidth="3" /></g>,
  norbit: <g><path d="M10 22V7H7l5-6 5 6h-3v15z" /><path d="M8 17c-8-1-8-7 0-7h8c8 0 8 7 0 7M8 13v7l-5-3z" /></g>,
  nshow: <g><path d="M1 1h6v6H1zM9 1h6v6H9zM17 1h6v6h-6zM1 9h16v14H1z" /><path d="M6 11l8 5-8 5z" fill="#2a2a2a" /></g>,
};

type IconProps = { n: string; box?: number; size?: number; stroke?: string };
const Icon = ({ n, box = 16, size = 16, stroke = c.line }: IconProps) => (
  <svg width={size} height={size} viewBox={`0 0 ${box} ${box}`} fill="none" stroke={stroke} aria-hidden="true">
    {art[n]}
  </svg>
);

/* ---------- ribbon helpers ---------- */

const Big = ({ n, label, w, caret, drop }: { n: string; label: string; w: number; caret?: boolean; drop?: number }) => (
  <BigButton $w={w} $drop={drop}>
    {n === "textA" ? (
      <svg width="34" height="34" viewBox="0 0 34 34" aria-hidden="true">
        <path d="M5 31L15 4h4l10 27M9 21.500h16" fill="none" stroke="#dfe3e6" strokeWidth="4" />
      </svg>
    ) : (
      <Icon n={n} box={34} size={34} />
    )}
    <BigLabel>{label}</BigLabel>
    {caret && <CaretBelow />}
  </BigButton>
);
const Small = ({ n, label, on }: { n: string; label?: string; on?: boolean }) => (
  <SmallButton $on={on} aria-label={label ?? n}>
    <Icon n={n} />
    {label}
  </SmallButton>
);
const Title = ({ children, caret = true, launch }: { children: string; caret?: boolean; launch?: boolean }) => (
  <PanelTitle $launch={launch}>
    {children}
    {caret && <Caret $s={4} />}
    {launch && <Launcher aria-label="대화상자"><Icon n="launch" box={8} size={8} /></Launcher>}
  </PanelTitle>
);

/* ---------- 3D scene ---------- */

const R = 172;
const TILT = 0.593;
const RISE = 0.805;
type Vec = [number, number, number];

/* Screen position and depth of a unit vector (right, toward viewer, up). */
const project = ([x, y, z]: Vec, cx: number, cy: number) => ({
  x: cx + R * x,
  y: cy + R * (y * TILT - z * RISE),
  front: y * RISE + z * TILT >= 0,
});

const trace = (f: (t: number) => Vec, cx: number, cy: number) => {
  const parts = { front: "", back: "" };
  let last = "";
  let prev = "";
  for (let i = 0; i <= 120; i++) {
    const p = project(f((i / 120) * Math.PI * 2), cx, cy);
    const side = p.front ? "front" : "back";
    const at = p.x.toFixed(1) + " " + p.y.toFixed(1);
    parts[side] += last === side ? "L" + at : (prev ? "M" + prev + "L" : "M") + at;
    last = side;
    prev = at;
  }
  return parts;
};

const h = Math.SQRT1_2;
const curves: ((t: number) => Vec)[] = [
  (t) => [Math.cos(t), Math.sin(t), 0],
  (t) => [h * Math.cos(t), h * Math.sin(t), h],
  (t) => [h * Math.cos(t), h * Math.sin(t), -h],
  (t) => [h * Math.cos(t), h * Math.cos(t), Math.sin(t)],
  (t) => [h * Math.cos(t), -h * Math.cos(t), Math.sin(t)],
];
const spheres = [
  { x: 821, y: 558, edge: "#d8dcda", dim: 0.75, shaded: true },
  { x: 654, y: 588, edge: "#d8dcda", dim: 0.8, shaded: true },
  { x: 781, y: 659, edge: "#a9c4d6", dim: 0.85, shaded: false },
];

const Sphere = ({ x, y, edge, dim, shaded }: (typeof spheres)[number]) => {
  const paths = curves.map((f) => trace(f, x, y));
  return (
    <g>
      <g opacity="0.7">
        <circle cx={x} cy={y} r={R} fill="url(#body)" />
        {shaded && <circle cx={x} cy={y} r={R} fill="url(#shadeTop)" />}
        <circle cx={x} cy={y} r={R} fill="url(#shadeLow)" />
      </g>
      <circle cx={x} cy={y} r={R} fill="none" stroke={edge} strokeOpacity="0.6" />
      <path d={paths.map((p) => p.back).join("")} fill="none" stroke="#dfe4e2" strokeOpacity="0.35" />
      <path d={paths.map((p) => p.front).join("")} fill="none" stroke="#f2f4f2" strokeOpacity={dim} strokeWidth="1.200" />
    </g>
  );
};

/* Curves of the two rear solids, still faintly visible through the front one. */
const GhostLines = () => (
  <path
    d={spheres.slice(0, 2).flatMap((s) => curves.map((f) => trace(f, s.x, s.y).front)).join("")}
    fill="none"
    stroke="#eef1ef"
    strokeOpacity="0.2"
  />
);

const gridPoint = (i: number, j: number) => [1352.5 + i * 125.8 - j * 118.2, 486.6 + i * 70.9 + j * 75.1];
const gridLines = (major: boolean) => {
  let d = "";
  for (let k = -20; k <= 20; k++) {
    if ((k % 5 === 0) !== major) continue;
    const [a, b] = gridPoint(-20, k);
    const [e, f] = gridPoint(20, k);
    const [g, i] = gridPoint(k, -20);
    const [l, m] = gridPoint(k, 20);
    d += `M${a} ${b}L${e} ${f}M${g} ${i}L${l} ${m}`;
  }
  return d;
};

const Grid = ({ on }: { on?: boolean }) => (
  <g fill="none">
    <path d={gridLines(false)} stroke={on ? "#000" : "#0f0f0f"} strokeOpacity={on ? 0.1 : 1} />
    <path d={gridLines(true)} stroke={on ? "#000" : "#1d1e1f"} strokeOpacity={on ? 0.14 : 1} />
  </g>
);

const Model = () => (
  <Scene viewBox="2 171 1916 826" preserveAspectRatio="xMidYMid slice" role="img" aria-label="구 모형">
    <defs>
      <linearGradient id="body" x1="0" y1="0.300" x2="1" y2="0.600">
        <stop offset="0" stopColor="#a2a6a4" />
        <stop offset="0.400" stopColor="#abafad" />
        <stop offset="1" stopColor="#9c9f9d" />
      </linearGradient>
      <radialGradient id="shadeTop" cx="0.800" cy="0.060" r="0.550">
        <stop offset="0" stopColor="#444" stopOpacity="0.900" />
        <stop offset="0.400" stopColor="#5c5c5c" stopOpacity="0.500" />
        <stop offset="1" stopColor="#888" stopOpacity="0" />
      </radialGradient>
      <radialGradient id="shadeLow" cx="0.240" cy="0.980" r="0.550">
        <stop offset="0" stopColor="#3a3a3a" stopOpacity="0.850" />
        <stop offset="0.450" stopColor="#5c5c5c" stopOpacity="0.450" />
        <stop offset="1" stopColor="#888" stopOpacity="0" />
      </radialGradient>
      <clipPath id="solids">
        {spheres.map((s) => <circle key={s.x} cx={s.x} cy={s.y} r={R} />)}
      </clipPath>
    </defs>
    <Grid />
    {spheres.map((s) => <Sphere key={s.x} {...s} />)}
    <GhostLines />
    <g clipPath="url(#solids)"><Grid on /></g>

    <g fill="none" strokeWidth="1">
      <path d="M1332 613v68" stroke="#7893a4" />
      <path d="M1313 671l58-37" stroke="#8f9483" />
      <path d="M1312 648l62 34" stroke="#8e6f6c" />
      <rect x="1329.500" y="655.500" width="5" height="5" fill="#000" stroke="#c9cec0" />
    </g>

    <g fill="none" strokeWidth="5" strokeLinecap="round">
      <path d="M43 957l33 18" stroke="#dd7f7f" />
      <path d="M43 955l31-20" stroke="#3fa13f" />
      <path d="M42 956v-38" stroke="#3f73b5" />
    </g>
    <g fill="none" strokeWidth="1.200">
      <path d="M40 900.500h11l-11 12.500h12" stroke="#1d4fa0" />
      <path d="M72 918l6 6 5-6M78 924v6" stroke="#24802a" />
      <path d="M74 960l12 11M86 960l-12 11" stroke="#8c2626" />
    </g>
  </Scene>
);

const CubeText = styled.text`
  font-size: 11px;
  font-weight: 700;
  text-anchor: middle;
  fill: #56565a;
`;
const RingText = styled.text`
  font-size: 19px;
  text-anchor: middle;
  fill: #9a9a9a;
`;
const ViewCube = () => (
  <svg width="144" height="120" viewBox="1765 231 144 120" aria-label="뷰큐브" role="img">
    <ellipse cx="1837" cy="302" rx="56" ry="36.500" fill="none" stroke="#2c2c2c" strokeWidth="13.500" />
    <path d="M1803 297l35 24 33-24-33-20z" fill="#0b0b0b" stroke="#0b0b0b" strokeWidth="8" strokeLinejoin="round" />
    <RingText transform="matrix(.7 .45 -.8 .5 1797 277)">서</RingText>
    <RingText transform="matrix(.7 -.45 .8 .5 1874 276)">북</RingText>
    <RingText transform="matrix(.8 .45 -.8 .6 1787 333)">남</RingText>
    <RingText transform="matrix(.8 -.45 .8 .6 1888 333)">동</RingText>
    <path d="M1836 239l34 18-32 20-35-20z" fill="#bdbdbd" />
    <path d="M1803 257l35 20v38l-33-18z" fill="#a9a9a9" />
    <path d="M1870 257l-32 20v38l31-20z" fill="#b0b0b0" />
    <path d="M1803 257l35 20 32-20M1838 277v38" fill="none" stroke="#3a3a3a" strokeWidth="1.200" strokeDasharray="6 3" />
    <CubeText transform="matrix(.75 .38 -.6 .4 1834 261)">평면도</CubeText>
    <CubeText transform="matrix(.75 .4 0 .9 1820 291)">정면도</CubeText>
    <CubeText transform="matrix(.68 -.42 0 .9 1854 291)">우측면도</CubeText>
  </svg>
);

/* ---------- app ---------- */

const quick = ["neu", "open", "save", "saveas", "mobopen", "mobsave", "print"];
const tabs = ["홈", "삽입", "주석", "파라메트릭", "뷰", "관리", "출력", "애드인", "공동 작업", "주요 응용프로그램"];
const navTools = ["nwheel", "caret1", "nhand", "nzoom", "caret2", "norbit", "caret3", "nshow"];

export default function App() {
  return (
    <Page>
      <Global />
      <Header>
        <Logo>
          <svg width="29" height="30" viewBox="0 0 29 30" aria-label="AutoCAD" role="img">
            <path d="M10 2h8l9 27h-7l-2-6-8-3-2 9H1z" fill="#b8232a" />
            <path d="M10 2h8l4 12-5-3-3-5-5 14 9 3-9 1-2 5H1z" fill="#dc3a3a" />
            <path d="M14 9l4 10-7-2z" fill="#1f2733" />
            <path d="M1 29l8-6-2 6zM18 23l6 6h-4z" fill="#f0a5a0" />
          </svg>
        </Logo>
        <TitleBar>
          <QuickAccess>
            {quick.map((n) => <QuickButton key={n} aria-label={n}><Icon n={n} box={17} size={17} /></QuickButton>)}
            <QuickButton aria-label="실행 취소"><Icon n="undo" box={17} size={17} /></QuickButton>
            <QuickButton $w={6} aria-label="취소 목록"><Caret $s={2} /></QuickButton>
            <QuickButton aria-label="다시 실행"><Icon n="redo" box={17} size={17} /></QuickButton>
            <QuickButton $w={6} aria-label="재실행 목록"><Caret $s={2} $c="#8d97a2" /></QuickButton>
            <QuickButton $w={14} aria-label="사용자화"><Icon n="custom" /></QuickButton>
          </QuickAccess>
          <WindowTitle><span>Autodesk AutoCAD 2021</span><span>Drawing5.dwg</span></WindowTitle>
          <TitleTools>
            <svg width="5" height="8" viewBox="0 0 5 8" aria-hidden="true"><path d="M0 0l5 4-5 4z" fill="#dfe3e6" /></svg>
            <SearchBox aria-label="검색" placeholder="키워드 또는 구절 입력" />
            <ToolButton $w={20} aria-label="찾기"><Icon n="mag" /></ToolButton>
            <UserBox />
            <ToolButton $w={18} aria-label="상점"><Icon n="cart" size={14} /></ToolButton>
            <ToolButton $w={26} aria-label="앱"><Icon n="tri" /></ToolButton>
            <ToolButton $w={9} aria-label="앱 목록"><Caret $s={2} /></ToolButton>
            <Rule />
            <ToolButton $w={20} aria-label="도움말"><Icon n="help" /></ToolButton>
            <ToolButton $w={18} aria-label="도움말 목록"><Caret $s={2} /></ToolButton>
            <MinimizeButton $w={79} aria-label="최소화"><Icon n="min" size={14} /></MinimizeButton>
            <ToolButton $w={28} aria-label="복원"><Icon n="restore" /></ToolButton>
            <ToolButton $w={18} aria-label="닫기"><Icon n="close" /></ToolButton>
          </TitleTools>
        </TitleBar>
        <TabRow>
          {tabs.map((t, i) => <RibbonTab key={t} $on={i === 0}>{t}</RibbonTab>)}
          <ViewToggle aria-label="리본 표시">
            <svg width="16" height="8" viewBox="0 0 16 8" aria-hidden="true"><path d="M0 0h16v8H0z" fill="#e6e9eb" /><path d="M6 5h4L8 2z" fill="#333" /></svg>
            <Caret $s={3} />
          </ViewToggle>
        </TabRow>
      </Header>

      <Ribbon>
        <Panel $w={203}>
          <PanelBody>
            <Big n="line" label="선" w={40} />
            <Big n="pline" label="폴리선" w={40} />
            <Big n="circle" label="원" w={40} caret />
            <Big n="arc" label="호" w={40} caret />
            <Stack>
              {["rect", "ellipse", "hatch"].map((n) => <ToolRow key={n}><Small n={n} /><Caret $s={2} /></ToolRow>)}
            </Stack>
          </PanelBody>
          <Title>그리기</Title>
        </Panel>

        <Panel $w={239}>
          <PanelBody>
            <Modify>
              <Small n="move" label="이동" /><Small n="rotate" label="회전" />
              <Split $wide><Small n="trim" label="자르기" /><Caret $s={2} /></Split><Small n="erase" />
              <Small n="copy" label="복사" /><Small n="mirror" label="대칭" />
              <Split $wide><Small n="fillet" label="모깎기" /><Caret $s={2} /></Split><Small n="box3d" />
              <Small n="stretch" label="신축" /><Small n="scale" label="축척" />
              <Split><Small n="array" label="배열" /><Caret $s={2} /></Split><Small n="offset" />
            </Modify>
          </PanelBody>
          <Title>수정</Title>
        </Panel>

        <Panel $w={168}>
          <PanelBody>
            <Big n="textA" label="문자" w={46} caret />
            <Big n="dim" label="치수" w={41} />
            <Stack>
              <ToolRow $gap={10}><Small n="lin" label="선형" /><Caret $s={2} /></ToolRow>
              <ToolRow $gap={10}><Small n="leader" label="지시선" /><Caret $s={2} /></ToolRow>
              <ToolRow><Small n="table" label="테이블" /></ToolRow>
            </Stack>
          </PanelBody>
          <Title>주석</Title>
        </Panel>

        <Panel $w={255}>
          <PanelBody>
            <Big n="layerprop" label={"도면층\n특성"} w={43} />
            <Stack>
              <ToolRow>
                <Combo>
                  <Icon n="bulb" /><Icon n="sun" /><Icon n="unlock" /><Swatch />
                  <Select aria-label="도면층" $latin><option>0</option></Select>
                  <Caret $s={4} />
                </Combo>
              </ToolRow>
              <ToolRow>{["l1", "l2", "l3", "l4"].map((n) => <Small key={n} n={n} />)}<Small n="l5" label="현재로 설정" /></ToolRow>
              <ToolRow>{["l6", "l7", "l8", "l9"].map((n) => <Small key={n} n={n} />)}<Small n="l10" label="도면층 일치" /></ToolRow>
            </Stack>
          </PanelBody>
          <Title>도면층</Title>
        </Panel>

        <Panel $w={137}>
          <PanelBody>
            <Big n="insert" label="삽입" w={42} caret />
            <Stack>
              <ToolRow><Small n="create" label="작성" /></ToolRow>
              <ToolRow><Small n="edit" label="편집" /></ToolRow>
              <ToolRow $gap={9}><Small n="attr" label="속성 편집" /><Caret $s={2} /></ToolRow>
            </Stack>
          </PanelBody>
          <Title>블록</Title>
        </Panel>

        <Panel $w={244}>
          <PanelBody>
            <Big n="match" label={"특성\n일치"} w={40} />
            <Stack>
              <ToolRow $gap={4}>
                <Small n="wheel" />
                <Combo><Swatch $gap={6} /><Select aria-label="색상" $latin><option>ByLayer</option></Select><Caret $s={4} /></Combo>
              </ToolRow>
              <ToolRow $gap={4}>
                <Small n="weights" />
                <Combo><Stroke /><Select aria-label="선가중치"><option>도면층별</option></Select><Caret $s={4} /></Combo>
              </ToolRow>
              <ToolRow $gap={4}>
                <Small n="types" />
                <Combo><Stroke /><Select aria-label="선종류" $latin><option>ByLayer</option></Select><Caret $s={4} /></Combo>
              </ToolRow>
            </Stack>
          </PanelBody>
          <Title launch>특성</Title>
        </Panel>

        <Panel $w={67}>
          <PanelBody>
            <Big n="group" label="그룹" w={42} />
            <Stack>
              <ToolRow><Small n="ungroup" /></ToolRow>
              <ToolRow><Small n="gedit" /></ToolRow>
              <ToolRow><Small n="gsel" on /></ToolRow>
            </Stack>
          </PanelBody>
          <Title>그룹</Title>
        </Panel>

        <Panel $w={103}>
          <PanelBody>
            <Big n="ruler" label="길이 분할" w={77} caret />
            <Stack>
              {["quick", "selall", "calc"].map((n) => <ToolRow key={n}><Small n={n} /></ToolRow>)}
            </Stack>
          </PanelBody>
          <Title>유틸리티</Title>
        </Panel>

        <Panel $w={100}>
          <PanelBody>
            <Big n="paste" label="붙여넣기" w={74} caret />
            <Stack>
              {["cut", "copyclip"].map((n) => <ToolRow key={n}><Small n={n} /></ToolRow>)}
            </Stack>
          </PanelBody>
          <Title caret={false}>클립보드</Title>
        </Panel>

        <Panel $w={49}>
          <PanelBody><Big n="base" label="기준" w={44} caret drop={4} /></PanelBody>
          <Title launch>뷰</Title>
        </Panel>

        <Panel>
          <PanelBody><Big n="touch" label={"모드\n선택"} w={40} /></PanelBody>
          <Title caret={false}>터치</Title>
        </Panel>
      </Ribbon>

      <DocTabs>
        <DocTab $w={127}>시작</DocTab>
        <DocTab $w={129} $on>Drawing5*<button aria-label="탭 닫기"><Icon n="close" size={12} /></button></DocTab>
        <NewTab aria-label="새 도면"><Icon n="plus" size={10} /></NewTab>
      </DocTabs>

      <Viewport>
        <Model />
        <ViewControls>
          <button aria-label="뷰 최소화"><Icon n="min" size={12} /></button>
          <button aria-label="뷰 복원">
            <svg width="12" height="12" viewBox="0 0 12 12" fill="none" stroke="#dfe3e6" strokeWidth="1.500" aria-hidden="true"><path d="M4 3V1h7v7H9M1 4h7v7H1z" /></svg>
          </button>
          <button aria-label="뷰 닫기">
            <svg width="11" height="12" viewBox="0 0 12 12" stroke="#dfe3e6" strokeWidth="2.500" aria-hidden="true"><path d="M2 2l8 8M10 2l-8 8" /></svg>
          </button>
        </ViewControls>
        <CubeHolder>
          <ViewCube />
          <WcsButton>WCS<Caret $s={3} $c="#a9a9b2" /></WcsButton>
        </CubeHolder>
        <NavBar>
          {navTools.map((n) =>
            n.startsWith("caret") ? (
              <Caret key={n} $s={2} $c="#222" />
            ) : (
              <button key={n} aria-label={n}><Icon n={n} box={24} size={23} stroke="#2a2a2a" /></button>
            )
          )}
        </NavBar>
      </Viewport>

      <CommandBar>
        <CommandTools>
          <svg width="8" height="18" viewBox="0 0 8 18" aria-hidden="true">
            <path d="M1 0v18M4 0v18M7 0v18" stroke="#aeb6be" strokeDasharray="1 2" />
          </svg>
          <CommandTool $w={14} aria-label="명령행 닫기"><Icon n="close" size={13} /></CommandTool>
          <CommandTool $w={29} aria-label="명령행 설정"><Icon n="wrench" box={17} size={16} /></CommandTool>
        </CommandTools>
        <CommandLabel htmlFor="command"><Icon n="prompt" /><Caret $c="#666" /></CommandLabel>
        <CommandInput id="command" aria-label="명령" placeholder="명령 입력" />
      </CommandBar>

      <Footer>
        <LayoutTabs>
          <LayoutTab $on>모형</LayoutTab>
          <LayoutTab>배치1</LayoutTab>
          <LayoutTab>배치2</LayoutTab>
          <LayoutTab $pad={8} aria-label="새 배치"><Icon n="plus" size={9} /></LayoutTab>
        </LayoutTabs>
        <StatusBar>
          <StatusGroup><StatusButton $w={26} $strong>모형</StatusButton></StatusGroup>
          <StatusGroup>
            <StatusButton $on aria-label="그리드"><Icon n="grid" /></StatusButton>
            <StatusButton aria-label="스냅"><Icon n="snap" /></StatusButton>
            <StatusButton $w={16} aria-label="스냅 목록"><Caret /></StatusButton>
          </StatusGroup>
          <StatusGroup>
            <StatusButton aria-label="직교"><Icon n="ortho" /></StatusButton>
            <StatusButton $on aria-label="극좌표"><Icon n="polar" box={17} /></StatusButton>
            <StatusButton $w={16} aria-label="극좌표 목록"><Caret /></StatusButton>
            <StatusButton aria-label="등각투영"><Icon n="iso" /></StatusButton>
            <StatusButton $w={16} aria-label="등각투영 목록"><Caret /></StatusButton>
          </StatusGroup>
          <StatusGroup>
            <StatusButton aria-label="추적"><Icon n="angle" /></StatusButton>
            <StatusButton $on aria-label="객체 스냅"><Icon n="osnap" /></StatusButton>
            <StatusButton $w={16} aria-label="객체 스냅 목록"><Caret /></StatusButton>
          </StatusGroup>
          <StatusGroup>
            <StatusButton $on aria-label="주석 표시"><Icon n="ann1" /></StatusButton>
            <StatusButton aria-label="주석 자동"><Icon n="ann2" /></StatusButton>
            <StatusButton aria-label="주석 축척"><Icon n="ann3" /></StatusButton>
            <StatusButton $w={34}>1:1<Caret /></StatusButton>
          </StatusGroup>
          <StatusGroup>
            <StatusButton aria-label="작업공간"><Icon n="gear" /></StatusButton>
            <StatusButton $w={16} aria-label="작업공간 목록"><Caret /></StatusButton>
          </StatusGroup>
          <StatusGroup><StatusButton aria-label="추가"><Icon n="plus" /></StatusButton></StatusGroup>
          <StatusGroup><StatusButton aria-label="객체 분리"><Icon n="shapes" box={17} /></StatusButton></StatusGroup>
          <StatusGroup><StatusButton $w={3} aria-hidden="true" /></StatusGroup>
          <StatusGroup>
            <StatusButton aria-label="화면 정리"><Icon n="clean" box={17} /></StatusButton>
            <StatusButton aria-label="메뉴"><Icon n="menu" /></StatusButton>
          </StatusGroup>
        </StatusBar>
      </Footer>
    </Page>
  );
}
